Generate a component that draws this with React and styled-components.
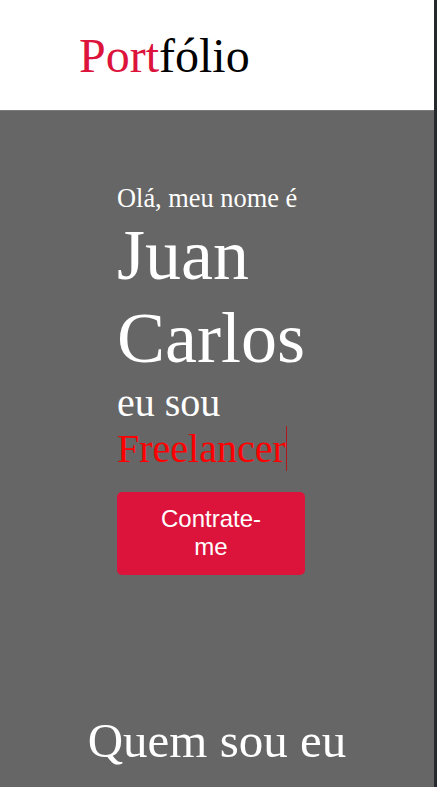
import styled, { createGlobalStyle } from 'styled-components'

const Global = createGlobalStyle`
  html, body {
    margin: 0;
    padding: 0;
    background: #666666;
  }
  body {
    font-family: 'Liberation Serif', 'Times New Roman', serif;
  }
`

const Page = styled.div`
  min-height: 787px;
  border-right: 3px solid #25282c;
  background: #666666;
  overflow: hidden;
`

const Header = styled.header`
  height: 111px;
  display: flex;
  align-items: center;
  padding-left: 79px;
  background: #ffffff;
  border-bottom: 1px solid #7a7a7a;
  box-sizing: border-box;
`

const Logo = styled.h1`
  margin: 0;
  font-family: 'Liberation Serif', serif;
  font-weight: 400;
  font-size: 48px;
  color: #000000;
  & > span {
    color: #dc143c;
  }
`

const Hero = styled.section`
  padding: 72px 0 70px;
  display: flex;
  justify-content: center;
`

const HeroInner = styled.div`
  width: 200px;
  color: #ffffff;
`

const Greeting = styled.p`
  margin: 0;
  font-size: 26.4px;
  line-height: 31px;
`

const Name = styled.h2`
  margin: 0;
  font-weight: 400;
  font-size: 72px;
`

const Role = styled.p`
  margin: 0;
  font-size: 40px;
  line-height: 46px;
`

const Typed = styled.span`
  color: #ff0000;
  border-right: 1px solid #b01820;
  margin-right: 2px;
`

const HireButton = styled.button`
  display: block;
  margin-top: 20px;
  width: 188px;
  padding: 13px 40px 15px;
  border: none;
  border-radius: 5px;
  background: #dc143c;
  color: #ffffff;
  font-family: 'Liberation Sans', Arial, sans-serif;
  font-size: 24px;
  line-height: 27.6px;
  text-align: center;
  cursor: pointer;
`

const About = styled.section`
  padding-top: 67px;
  text-align: center;
`

const SectionTitle = styled.h2`
  margin: 0;
  font-weight: 400;
  font-size: 49px;
  color: #ffffff;
`

export default function App() {
  return (
    <>
      <Global />
      <Page>
        <Header>
          <Logo>
            <span>Port</span>fólio
          </Logo>
        </Header>
        <Hero>
          <HeroInner>
            <Greeting>Olá, meu nome é</Greeting>
            <Name>Juan Carlos</Name>
            <Role>
              eu sou <Typed>Freelancer</Typed>
            </Role>
            <HireButton>Contrate-me</HireButton>
          </HeroInner>
        </Hero>
        <About>
          <SectionTitle>Quem sou eu</SectionTitle>
        </About>
      </Page>
    </>
  )
}
